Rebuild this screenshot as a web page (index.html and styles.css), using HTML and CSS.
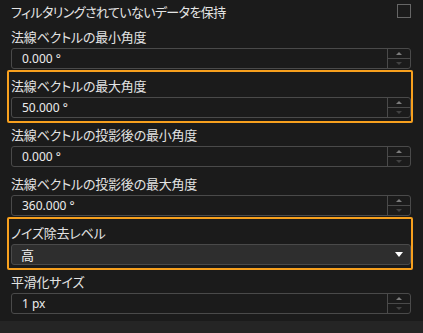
FILE: index.html
```html
<!DOCTYPE html>
<html lang="ja">
<head>
<meta charset="utf-8">
<link rel="stylesheet" href="styles.css">
</head>
<body>
<div class="panel">
  <div class="row-check">
    <span class="label-inline">フィルタリングされていないデータを保持</span>
    <span class="checkbox"></span>
  </div>
  <div class="field">
    <div class="label">法線ベクトルの最小角度</div>
    <div class="spin"><span class="value">0.000 °</span><div class="btns"><span class="btn"><i class="up"></i></span><span class="btn"><i class="down"></i></span></div></div>
  </div>
  <div class="field hl">
    <div class="label">法線ベクトルの最大角度</div>
    <div class="spin"><span class="value">50.000 °</span><div class="btns"><span class="btn"><i class="up"></i></span><span class="btn"><i class="down"></i></span></div></div>
  </div>
  <div class="field">
    <div class="label">法線ベクトルの投影後の最小角度</div>
    <div class="spin"><span class="value">0.000 °</span><div class="btns"><span class="btn"><i class="up"></i></span><span class="btn"><i class="down"></i></span></div></div>
  </div>
  <div class="field">
    <div class="label">法線ベクトルの投影後の最大角度</div>
    <div class="spin"><span class="value">360.000 °</span><div class="btns"><span class="btn"><i class="up"></i></span><span class="btn"><i class="down"></i></span></div></div>
  </div>
  <div class="field hl">
    <div class="label">ノイズ除去レベル</div>
    <div class="select"><span class="value">高</span><i class="caret"></i></div>
  </div>
  <div class="field">
    <div class="label">平滑化サイズ</div>
    <div class="spin"><span class="value">1 px</span><div class="btns"><span class="btn"><i class="up"></i></span><span class="btn"><i class="down"></i></span></div></div>
  </div>
</div>
<div class="footer"></div>
</body>
</html>
```
FILE: styles.css
```css
* { box-sizing: border-box; }
html, body {
  margin: 0;
  padding: 0;
  background: #1b1b1b;
  width: 423px;
  height: 333px;
  overflow: hidden;
}
body {
  font-family: "Noto Sans CJK JP", "Noto Sans", sans-serif;
  color: #e4e4e4;
}
.panel {
  padding: 0 12px 0 11px;
}
.row-check {
  height: 23px;
  display: flex;
  justify-content: space-between;
  align-items: flex-start;
}
.label-inline, .label {
  font-size: 13px;
  font-feature-settings: "palt";
  white-space: nowrap;
}
.label-inline {
  line-height: 23px;
  letter-spacing: -0.6px;
}
.label {
  height: 25px;
  line-height: 22px;
  padding-top: 3px;
  letter-spacing: -0.2px;
}
.checkbox {
  width: 14px;
  height: 14px;
  margin-top: 4px;
  border: 1px solid #666;
}
.field {
  position: relative;
  height: 49px;
}
.field.hl::after {
  content: "";
  position: absolute;
  top: -2px;
  bottom: -2px;
  left: -4px;
  right: -2px;
  border: 2px solid #f7a01e;
  border-radius: 2px;
  pointer-events: none;
}
.spin, .select {
  height: 21px;
  border: 1px solid #4a4a4a;
  border-radius: 3px;
  display: flex;
  align-items: stretch;
}
.value {
  flex: 1;
  padding-left: 10px;
  font-family: "Noto Sans", "Noto Sans CJK JP", sans-serif;
  font-size: 12px;
  line-height: 19px;
  color: #ececec;
}
.btns {
  width: 23px;
  border-left: 1px solid #4a4a4a;
  display: flex;
  flex-direction: column;
}
.btn {
  flex: 1;
  display: flex;
  align-items: center;
  justify-content: center;
}
.btn + .btn {
  border-top: 1px solid #4a4a4a;
}
.up {
  width: 0; height: 0;
  border-left: 3px solid transparent;
  border-right: 3px solid transparent;
  border-bottom: 3px solid #7c7c7c;
}
.down {
  width: 0; height: 0;
  border-left: 3px solid transparent;
  border-right: 3px solid transparent;
  border-top: 3px solid #424242;
}
.select {
  background: #2e2e2e;
  align-items: center;
}
.select .value {
  padding-left: 9px;
  font-family: "Noto Sans CJK JP", sans-serif;
  font-size: 13px;
  color: #f0f0f0;
}
.caret {
  width: 0; height: 0;
  margin-right: 7px;
  border-left: 4px solid transparent;
  border-right: 4px solid transparent;
  border-top: 5px solid #ffffff;
}
.footer {
  margin-top: 4px;
  height: 12px;
  background: #252525;
}
```
